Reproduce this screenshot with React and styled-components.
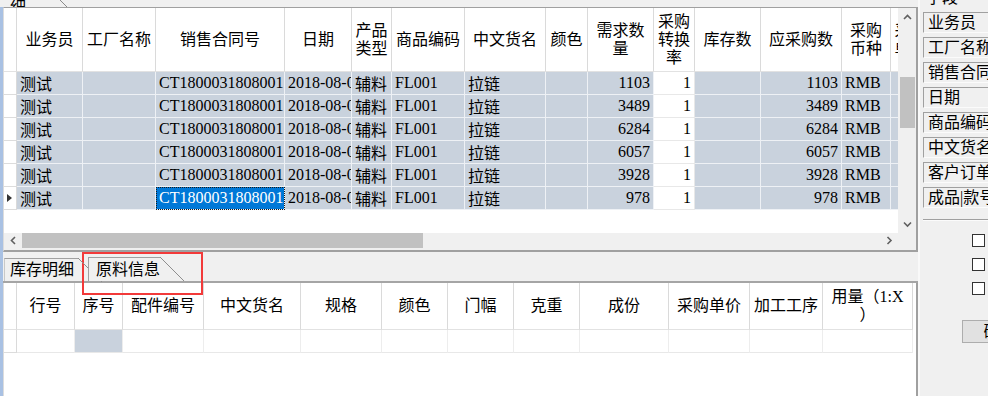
import styled, { createGlobalStyle } from "styled-components";

const GlobalStyle = createGlobalStyle`
  html, body { margin: 0; padding: 0; }
  body {
    background: #f0f0f0;
    font-family: "Liberation Serif", "Noto Sans CJK SC", serif;
    font-size: 16px;
    color: #000;
  }
  * { box-sizing: border-box; }
`;

const Window = styled.div`
  position: relative;
  display: flex;
  width: 988px;
  height: 396px;
  overflow: hidden;
  background: #f0f0f0;
`;

const LeftPane = styled.div`
  flex: none;
  width: 918px;
  display: flex;
  flex-direction: column;
`;

const TopStrip = styled.div`
  flex: none;
  height: 7px;
  overflow: hidden;
  display: flex;
`;

const TopTab = styled.div`
  position: relative;
  width: 60px;
  height: 7px;
  padding-left: 10px;
  line-height: 16px;

  span {
    display: block;
    margin-top: -16px;
  }

  &::after {
    content: "";
    position: absolute;
    left: 100%;
    top: 0;
    width: 7px;
    height: 7px;
    background: linear-gradient(to top right, transparent calc(50% - 0.7px), #8a8a8a 50%, transparent calc(50% + 0.7px));
  }
`;

const Framed = styled.div`
  flex: 1;
  display: flex;
  flex-direction: column;
  border-left: 3px solid #a9c1e3;
`;

const TopGrid = styled.div`
  flex: none;
  height: 245px;
  display: flex;
  flex-direction: column;
  border-top: 1px solid #a0a0a0;
  border-left: 1px solid #dcdcdc;
  border-right: 2px solid #a0a0a0;
  border-bottom: 2px solid #a0a0a0;
  padding-bottom: 2px;
  background: #f0f0f0;
`;

const GridMain = styled.div`
  flex: none;
  height: 225px;
  display: flex;
`;

const GridBody = styled.div`
  flex: 1;
  min-width: 0;
  overflow: hidden;
  background: #fff;
`;

const Row = styled.div`
  display: flex;
  flex: none;
  height: ${(p) => p.$h}px;
`;

const HeadCell = styled.div`
  flex: none;
  width: ${(p) => p.$w}px;
  height: 100%;
  display: flex;
  align-items: center;
  justify-content: center;
  text-align: center;
  line-height: 18px;
  padding: 0 2px;
  overflow: hidden;
  background: #fff;
  border-right: 1px solid #dadada;
  border-bottom: 1px solid #e2e2e2;
`;

const tones = {
  data: "#c9d2dd",
  white: "#ffffff",
  selected: "#0078d7",
};

const Cell = styled.div`
  position: relative;
  flex: none;
  width: ${(p) => p.$w}px;
  height: 100%;
  display: flex;
  align-items: center;
  justify-content: ${(p) => (p.$right ? "flex-end" : "flex-start")};
  padding: 0 3px;
  white-space: nowrap;
  overflow: hidden;
  background: ${(p) => tones[p.$tone || "data"]};
  color: ${(p) => (p.$tone === "selected" ? "#fff" : "#000")};
  border-right: 1px solid ${(p) => (p.$tone === "white" ? "#e8e8e8" : "#eef1f5")};
  border-bottom: 1px solid ${(p) => (p.$tone === "white" ? "#e8e8e8" : "#eef1f5")};
  outline: ${(p) => (p.$tone === "selected" ? "1px dotted #1a1a1a" : "none")};
  outline-offset: -1px;
`;

const RowHead = styled.div`
  flex: none;
  width: 13px;
  height: 100%;
  display: flex;
  align-items: center;
  padding-left: 3px;
  background: #fff;
  border-right: 1px solid #dadada;
  border-bottom: 1px solid ${(p) => (p.$head ? "#e2e2e2" : "#dcdcdc")};
`;

const Pointer = styled.div`
  width: 0;
  height: 0;
  border-top: 4px solid transparent;
  border-bottom: 4px solid transparent;
  border-left: 5px solid #333;
`;

const VScroll = styled.div`
  flex: none;
  width: 18px;
  display: flex;
  flex-direction: column;
  background: #f0f0f0;
`;

const ArrowBox = styled.div`
  flex: none;
  width: ${(p) => p.$w || 18}px;
  height: ${(p) => p.$h || 18}px;
  display: flex;
  align-items: center;
  justify-content: center;
`;

const VTrack = styled.div`
  flex: 1;
  padding: 51px 1px 0 2px;
`;

const VThumb = styled.div`
  height: 51px;
  background: #c1c1c1;
`;

const HScrollRow = styled.div`
  flex: none;
  height: 15px;
  display: flex;
`;

const HTrack = styled.div`
  flex: 1;
  display: flex;
  background: #f0f0f0;
`;

const HThumb = styled.div`
  flex: none;
  width: 401px;
  background: #c1c1c1;
`;

const Spacer = styled.div`
  flex: 1;
`;

const Corner = styled.div`
  flex: none;
  width: 18px;
  background: #f0f0f0;
`;

const TabStrip = styled.div`
  flex: none;
  height: 31px;
  display: flex;
  align-items: flex-end;
  padding-left: 1px;
  border-bottom: 2px solid #a5a5a5;
`;

const Tab = styled.div`
  position: relative;
  flex: none;
  width: ${(p) => p.$w}px;
  height: ${(p) => p.$h}px;
  margin-left: ${(p) => p.$shift || 0}px;
  margin-right: 24px;
  padding-left: ${(p) => p.$pad}px;
  display: flex;
  align-items: center;
  line-height: 18px;
  background: #f0f0f0;
  border-top: 1px solid #a0a0a0;
  border-left: 1px solid ${(p) => (p.$front ? "#a0a0a0" : "#c8c8c8")};
  z-index: ${(p) => (p.$front ? 2 : 1)};

  &::after {
    content: "";
    position: absolute;
    left: 100%;
    top: -1px;
    width: 24px;
    height: 24px;
    background: linear-gradient(to top right, transparent calc(50% - 0.7px), #8e8e8e 50%, transparent calc(50% + 0.7px));
  }
`;

const BottomGrid = styled.div`
  flex: 1;
  overflow: hidden;
  background: #fff;
  border-left: 1px solid #dcdcdc;
  border-right: 2px solid #a0a0a0;
`;

const EmptyCell = styled.div`
  flex: none;
  width: ${(p) => p.$w}px;
  height: 100%;
  background: ${(p) => (p.$shade ? "#c9d2dd" : "#fff")};
  border-right: 1px solid #ededed;
  border-bottom: 1px solid #e8e8e8;
`;

const Annotation = styled.div`
  position: absolute;
  left: 82px;
  top: 252px;
  width: 121px;
  height: 43px;
  border: 2px solid #f23a3a;
  pointer-events: none;
`;

const RightPane = styled.div`
  flex: none;
  width: 70px;
  overflow: hidden;
  display: flex;
  flex-direction: column;
  border-left: 2px solid #f9f9f9;
  padding-left: 3px;
`;

const Caption = styled.div`
  flex: none;
  height: 8px;
  overflow: hidden;
  padding-left: 3px;
  line-height: 18px;

  span {
    display: block;
    margin-top: -11px;
  }
`;

const FieldList = styled.div`
  display: flex;
  flex-direction: column;
  gap: 4px;
  padding-top: 4px;
`;

const Field = styled.div`
  flex: none;
  width: 100px;
  height: 21px;
  display: flex;
  align-items: center;
  padding-left: 4px;
  white-space: nowrap;
  line-height: 18px;
  background: #f0f0f0;
  border-top: 1px solid #a0a0a0;
  border-left: 1px solid #a0a0a0;
  border-bottom: 1px solid #fbfbfb;
`;

const Divider = styled.div`
  flex: none;
  margin-top: 11px;
  width: 100px;
  border-top: 1px solid #a0a0a0;
  border-bottom: 1px solid #fbfbfb;
`;

const CheckList = styled.div`
  display: flex;
  flex-direction: column;
  gap: 11px;
  padding: 13px 0 0 49px;
`;

const Check = styled.div`
  width: 13px;
  height: 13px;
  background: #fff;
  border: 1px solid #333;
`;

const Button = styled.div`
  flex: none;
  margin: 25px 0 0 39px;
  width: 75px;
  height: 23px;
  display: flex;
  align-items: center;
  justify-content: center;
  background: #e1e1e1;
  border: 1px solid #adadad;
  line-height: 18px;
`;

function Chevron({ dir }) {
  const pts = {
    up: "1,5 4.5,1.5 8,5",
    down: "1,1.5 4.5,5 8,1.5",
    left: "5,1 1.5,4.5 5,8",
    right: "1.5,1 5,4.5 1.5,8",
  }[dir];
  const vertical = dir === "up" || dir === "down";
  return (
    <svg width={vertical ? 9 : 7} height={vertical ? 7 : 9} viewBox={vertical ? "0 0 9 7" : "0 0 7 9"}>
      <polyline points={pts} fill="none" stroke="#606060" strokeWidth="1.6" />
    </svg>
  );
}

function Lines({ parts }) {
  const list = Array.isArray(parts) ? parts : [parts];
  return (
    <div>
      {list.map((t, i) => (
        <div key={i}>{t}</div>
      ))}
    </div>
  );
}

const topCols = [
  { key: "rep", w: 66, title: "业务员" },
  { key: "factory", w: 73, title: "工厂名称" },
  { key: "contract", w: 129, title: "销售合同号" },
  { key: "date", w: 67, title: "日期" },
  { key: "kind", w: 40, title: ["产品", "类型"] },
  { key: "code", w: 73, title: "商品编码" },
  { key: "name", w: 81, title: "中文货名" },
  { key: "color", w: 42, title: "颜色" },
  { key: "need", w: 66, title: ["需求数", "量"], right: true },
  { key: "rate", w: 41, title: ["采购", "转换", "率"], right: true, tone: "white" },
  { key: "stock", w: 66, title: "库存数", right: true },
  { key: "buy", w: 81, title: "应采购数", right: true },
  { key: "cur", w: 49, title: ["采购", "币种"] },
  { key: "price", w: 40, title: ["采购", "单价"] },
];

const quantities = [1103, 3489, 6284, 6057, 3928, 978];

const rows = quantities.map((q) => ({
  rep: "测试",
  factory: "",
  contract: "CT1800031808001",
  date: "2018-08-01",
  kind: "辅料",
  code: "FL001",
  name: "拉链",
  color: "",
  need: q,
  rate: 1,
  stock: "",
  buy: q,
  cur: "RMB",
  price: "",
}));

const bottomCols = [
  { w: 58, title: "行号" },
  { w: 48, title: "序号", shade: true },
  { w: 81, title: "配件编号" },
  { w: 97, title: "中文货名" },
  { w: 81, title: "规格" },
  { w: 66, title: "颜色" },
  { w: 66, title: "门幅" },
  { w: 66, title: "克重" },
  { w: 89, title: "成份" },
  { w: 81, title: "采购单价" },
  { w: 73, title: "加工工序" },
  { w: 90, title: ["用量（1:X", "）"] },
];

const fields = ["业务员", "工厂名称", "销售合同号", "日期", "商品编码", "中文货名", "客户订单号", "成品|款号"];

export default function App() {
  const lastRow = rows.length - 1;
  return (
    <>
      <GlobalStyle />
      <Window>
        <LeftPane>
          <TopStrip>
            <TopTab>
              <span>采购明细</span>
            </TopTab>
          </TopStrip>
          <Framed>
            <TopGrid>
              <GridMain>
                <GridBody>
                  <Row $h={64}>
                    <RowHead $head />
                    {topCols.map((c) => (
                      <HeadCell key={c.key} $w={c.w}>
                        <Lines parts={c.title} />
                      </HeadCell>
                    ))}
                  </Row>
                  {rows.map((r, i) => (
                    <Row key={i} $h={23}>
                      <RowHead>{i === lastRow && <Pointer />}</RowHead>
                      {topCols.map((c) => (
                        <Cell
                          key={c.key}
                          $w={c.w}
                          $right={c.right}
                          $tone={i === lastRow && c.key === "contract" ? "selected" : c.tone}
                        >
                          {r[c.key]}
                        </Cell>
                      ))}
                    </Row>
                  ))}
                </GridBody>
                <VScroll>
                  <ArrowBox>
                    <Chevron dir="up" />
                  </ArrowBox>
                  <VTrack>
                    <VThumb />
                  </VTrack>
                  <ArrowBox>
                    <Chevron dir="down" />
                  </ArrowBox>
                </VScroll>
              </GridMain>
              <HScrollRow>
                <HTrack>
                  <ArrowBox $h={15}>
                    <Chevron dir="left" />
                  </ArrowBox>
                  <HThumb />
                  <Spacer />
                  <ArrowBox $h={15}>
                    <Chevron dir="right" />
                  </ArrowBox>
                </HTrack>
                <Corner />
              </HScrollRow>
            </TopGrid>
            <TabStrip>
              <Tab $w={74} $h={23} $pad={5}>
                库存明细
              </Tab>
              <Tab $w={72} $h={24} $pad={7} $shift={-14} $front>
                原料信息
              </Tab>
            </TabStrip>
            <BottomGrid>
              <Row $h={47}>
                <RowHead $head />
                {bottomCols.map((c, i) => (
                  <HeadCell key={i} $w={c.w}>
                    <Lines parts={c.title} />
                  </HeadCell>
                ))}
              </Row>
              <Row $h={23}>
                <RowHead />
                {bottomCols.map((c, i) => (
                  <EmptyCell key={i} $w={c.w} $shade={c.shade} />
                ))}
              </Row>
            </BottomGrid>
          </Framed>
        </LeftPane>
        <RightPane>
          <Caption>
            <span>字段</span>
          </Caption>
          <FieldList>
            {fields.map((f) => (
              <Field key={f}>{f}</Field>
            ))}
          </FieldList>
          <Divider />
          <CheckList>
            <Check />
            <Check />
            <Check />
          </CheckList>
          <Button>确定</Button>
        </RightPane>
        <Annotation />
      </Window>
    </>
  );
}
